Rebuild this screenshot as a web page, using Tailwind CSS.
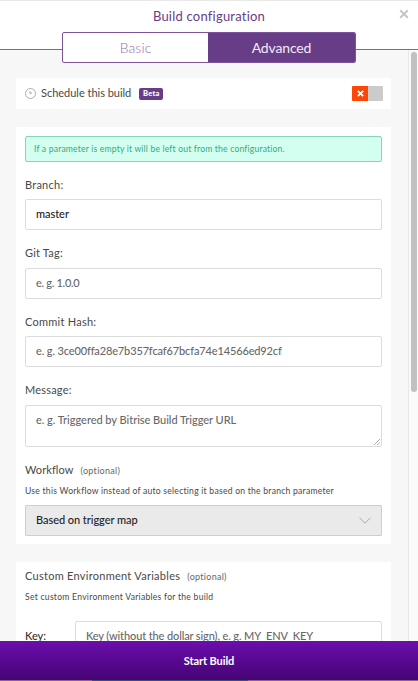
<!DOCTYPE html>
<html lang="en">
<head>
<meta charset="utf-8">
<title>Build configuration</title>
<script src="https://cdn.jsdelivr.net/npm/@tailwindcss/browser@4"></script>
</head>
<body class="h-[681px] w-[418px] overflow-hidden bg-[#f7f7f7] font-[Lato,sans-serif] text-[11px] whitespace-nowrap text-[#484848]">
<div class="flex h-[681px] flex-col">
  <header class="relative z-10 flex h-[50px] shrink-0 flex-col items-center border-t border-b border-[#8a5fab] border-t-[#e8e8e8] bg-white">
    <h1 class="mt-[6px] h-[18px] text-[13px] leading-[19px] tracking-[0.22px] text-[#683d87]">Build configuration</h1>
    <button class="absolute top-[8px] right-[9px]" aria-label="Close"><svg class="block size-[10px]" viewBox="0 0 10 10" fill="none" stroke="#c6c6c6" stroke-width="2"><path d="M1.2 1.2 8.8 8.8M8.8 1.2 1.2 8.8"/></svg></button>
    <nav class="mt-[7px] flex h-[31px] w-[294px] shrink-0 overflow-hidden rounded-[2px] border border-[#7d539b] bg-white text-[14px] leading-[29px]">
      <a class="w-[145px] text-center font-light tracking-[0.1px] text-[#9470ad]">Basic</a>
      <a class="flex-1 bg-[#683d87] text-center tracking-[-0.15px] text-[#f0eaf4]">Advanced</a>
    </nav>
  </header>
  <div class="flex min-h-0 flex-1">
    <main class="flex min-w-0 flex-1 flex-col gap-[18px] overflow-hidden pt-[28px] pr-[17px] pl-[16px]">
      <section class="flex h-[31px] shrink-0 items-center bg-white pr-[8px] pl-[9px]">
        <svg class="mr-[5px] size-[11px]" viewBox="0 0 11 11" fill="none" stroke="#a5a5a5" stroke-width=".9"><circle cx="5.5" cy="5.5" r="5"/><path d="M5 3V6L7 4.6"/></svg>
        <span class="text-[11px] tracking-[-0.02px]">Schedule this build</span>
        <span class="mt-[1px] ml-[8px] h-[12px] w-[24px] rounded-[2px] bg-[#683d87] text-center text-[7.5px] leading-[11px] font-black tracking-[0.2px] text-white">Beta</span>
        <span class="ml-auto flex h-[15px] w-[31px] overflow-hidden rounded-[1px] bg-[#cbcbcb]"><span class="flex w-[16px] items-center justify-center bg-[#ff4605]"><svg class="size-[7px]" viewBox="0 0 6 6" fill="none" stroke="#fff" stroke-width="1.5"><path d="M.7.7 5.3 5.3M5.3.7.7 5.3"/></svg></span></span>
      </section>
      <section class="flex h-[417px] shrink-0 flex-col bg-white px-[9px] pt-[9px]">
        <p class="mb-[14px] h-[26px] shrink-0 rounded-[2px] border border-[#87d5b9] bg-[#d2fff0] pl-[8px] text-[8.6px] leading-[24px] text-[#35aa7f]"><span class="tracking-[0.18px]">If a parameter is empty it will be left out from the configuration.</span></p>
        <label class="h-[23px] shrink-0 leading-[17px] tracking-[0.25px]">Branch:</label>
        <div class="mb-[14px] h-[31px] shrink-0 rounded-[2px] border border-[#dcdcdc] pl-[10px] leading-[28px] font-medium tracking-[-0.05px] text-[#222]">master</div>
        <label class="h-[24px] shrink-0 leading-[17px] tracking-[0.2px]">Git Tag:</label>
        <div class="mb-[14px] h-[31px] shrink-0 rounded-[2px] border border-[#dcdcdc] pl-[10px] leading-[28px] font-medium tracking-[-0.3px] text-[#686868]">e. g. 1.0.0</div>
        <label class="h-[23px] shrink-0 leading-[17px] tracking-[0.25px]">Commit Hash:</label>
        <div class="mb-[14px] h-[31px] shrink-0 rounded-[2px] border border-[#dcdcdc] pl-[10px] leading-[28px] font-medium tracking-[-0.14px] text-[#686868]">e. g. 3ce00ffa28e7b357fcaf67bcfa74e14566ed92cf</div>
        <label class="h-[24px] shrink-0 leading-[17px] tracking-[0.2px]">Message:</label>
        <div class="relative mb-[14px] h-[42px] shrink-0 rounded-[2px] border border-[#dcdcdc] pl-[10px] leading-[28px] font-medium tracking-[-0.03px] text-[#686868]">e. g. Triggered by Bitrise Build Trigger URL
          <svg class="absolute right-[1px] bottom-[1px] size-[6px]" viewBox="0 0 6 6" stroke="#999" stroke-width=".8"><path d="M0 6 6 0M3.3 6 6 3.3"/></svg>
        </div>
        <div class="flex h-[22px] shrink-0 items-baseline leading-[17px]"><span class="tracking-[0.08px]">Workflow</span><span class="ml-[7px] text-[9px] tracking-[0.3px] text-[#666]">(optional)</span></div>
        <p class="h-[22px] shrink-0 text-[8.6px] leading-[17px] tracking-[0.24px]">Use this Workflow instead of auto selecting it based on the branch parameter</p>
        <div class="flex h-[31px] shrink-0 items-center justify-between rounded-[1px] border border-[#cecece] bg-[#eaeaea] pr-[10px] pl-[10px] font-medium text-[#222]"><span class="tracking-[-0.05px]">Based on trigger map</span>
          <svg class="h-[7px] w-[12px]" viewBox="0 0 12 7" fill="none" stroke="#aaa"><path d="M.5.7 6 6.2 11.5.7"/></svg>
        </div>
      </section>
      <section class="flex h-[120px] shrink-0 flex-col bg-white px-[9px] pt-[5px]">
        <div class="flex h-[22px] shrink-0 items-baseline leading-[17px]"><span class="tracking-[0.27px]">Custom Environment Variables</span><span class="ml-[7px] text-[9px] tracking-[0.28px] text-[#666]">(optional)</span></div>
        <p class="mb-[18px] h-[14px] shrink-0 text-[8.6px] leading-[16px] tracking-[0.26px]">Set custom Environment Variables for the build</p>
        <div class="flex h-[31px] shrink-0 leading-[29px]"><span class="w-[50px] font-medium text-[#333]">Key:</span><div class="flex-1 rounded-[2px] border border-[#dcdcdc] pl-[10px] leading-[28px] font-medium tracking-[-0.12px] text-[#686868]">Key (without the dollar sign), e. g. MY_ENV_KEY</div></div>
      </section>
    </main>
    <aside class="flex w-[10px] justify-end border-l border-[#e8e8e8] bg-[#fafafa] pt-[2px] pr-[1px]"><div class="h-[340px] w-[6px] rounded-full bg-[#c1c1c1]"></div></aside>
  </div>
  <footer class="shrink-0">
    <button class="block h-[39px] w-full bg-linear-to-b from-[#6c0eae] to-[#460475] text-center text-[11px] leading-[37px] font-bold tracking-[-0.08px] text-white">Start Build</button>
    <div class="flex h-px bg-[#886291]"><div class="ml-[92px] w-[156px] bg-[#34536f]"></div></div>
  </footer>
</div>
</body>
</html>
